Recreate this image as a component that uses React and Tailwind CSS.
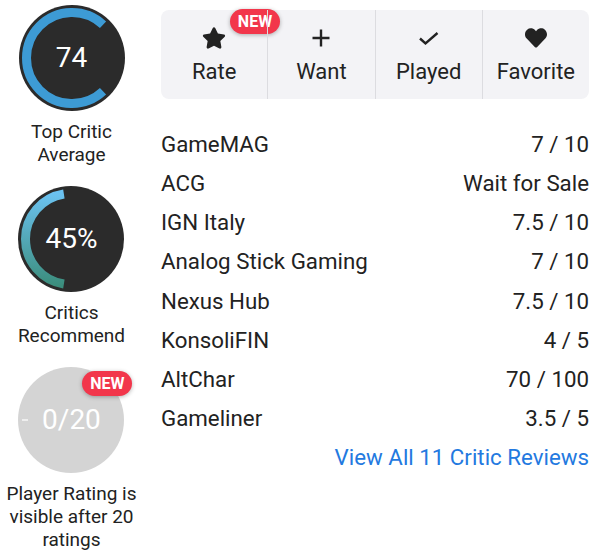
import { FaStar, FaHeart } from "react-icons/fa"

const R = 45.5

// angles measured from 12 o'clock, clockwise
function arc(start, sweep) {
  const pt = (deg) => {
    const a = (deg * Math.PI) / 180
    return `${(53 + R * Math.sin(a)).toFixed(2)} ${(53 - R * Math.cos(a)).toFixed(2)}`
  }
  return `M ${pt(start)} A ${R} ${R} 0 ${sweep > 180 ? 1 : 0} 1 ${pt(start + sweep)}`
}

const reviews = [
  ["GameMAG", "7 / 10"],
  ["ACG", "Wait for Sale"],
  ["IGN Italy", "7.5 / 10"],
  ["Analog Stick Gaming", "7 / 10"],
  ["Nexus Hub", "7.5 / 10"],
  ["KonsoliFIN", "4 / 5"],
  ["AltChar", "70 / 100"],
  ["Gameliner", "3.5 / 5"],
]

function NewBadge({ className }) {
  return (
    <span
      className={`absolute flex h-[25px] w-[50px] items-center justify-center rounded-full bg-[#f2364b] text-[16px] font-bold leading-none text-white shadow-[0_1px_4px_rgba(0,0,0,0.3)] ${className}`}
    >
      NEW
    </span>
  )
}

function ScoreRing({ value, label, kind }) {
  return (
    <div className="flex flex-col items-center">
      <div className="relative h-[106px] w-[106px]">
        <svg width="106" height="106" viewBox="0 0 106 106" className="absolute inset-0">
          <defs>
            <linearGradient id="recGrad" x1="0" y1="6" x2="0" y2="100" gradientUnits="userSpaceOnUse">
              <stop offset="0" stopColor="#6cc3f3" />
              <stop offset="1" stopColor="#3b8d7c" />
            </linearGradient>
          </defs>
          {kind === "empty" ? (
            <>
              <circle cx="53" cy="53" r="53" fill="#d4d4d4" />
              <line x1="4" y1="53" x2="10" y2="53" stroke="#ffffff" strokeOpacity="0.6" strokeWidth="2" />
            </>
          ) : (
            <>
              <circle cx="53" cy="53" r="53" fill="#2b2b2b" />
              <path
                d={kind === "avg" ? arc(137, 266) : arc(189, 162)}
                fill="none"
                stroke={kind === "avg" ? "#3d9bd5" : "url(#recGrad)"}
                strokeWidth="9"
              />
            </>
          )}
        </svg>
        <div className="absolute inset-0 flex items-center justify-center text-[28px] text-white">{value}</div>
        {kind === "empty" && <NewBadge className="left-[64px] top-[4px]" />}
      </div>
      <div className="mt-[9px] text-center text-[19px] leading-[23px] text-[#222]">{label}</div>
    </div>
  )
}

export default function App() {
  const actions = [
    { label: "Rate", icon: <FaStar size={24} /> },
    {
      label: "Want",
      icon: (
        <svg width="24" height="24" viewBox="0 0 24 24">
          <path d="M12 3.5v17M3.5 12h17" stroke="#222" strokeWidth="2.4" fill="none" />
        </svg>
      ),
    },
    {
      label: "Played",
      icon: (
        <svg width="24" height="24" viewBox="0 0 24 24">
          <path d="M3 12.5l5.5 5L20.5 7" stroke="#222" strokeWidth="2.4" fill="none" />
        </svg>
      ),
    },
    { label: "Favorite", icon: <FaHeart size={22} /> },
  ]

  return (
    <div className="flex h-[558px] w-[598px] bg-white font-['Roboto',sans-serif] text-[#222]">
      {/* score rings */}
      <div className="flex w-[143px] flex-col items-center gap-[20px] pt-[5px]">
        <ScoreRing value="74" label={<>Top Critic<br />Average</>} kind="avg" />
        <ScoreRing value="45%" label={<>Critics<br />Recommend</>} kind="rec" />
        <ScoreRing value="0/20" label={<>Player Rating is<br />visible after 20<br />ratings</>} kind="empty" />
      </div>

      {/* actions + reviews */}
      <div className="ml-[18px] w-[428px] pt-[10px]">
        <div className="relative flex h-[89px] rounded-lg bg-[#f3f3f6]">
          {actions.map((a, i) => (
            <div
              key={a.label}
              className={`relative flex flex-1 flex-col items-center justify-center gap-[9px] pt-[2px] ${i > 0 ? "border-l border-[#dcdce0]" : ""}`}
            >
              <div className="flex h-[24px] items-center justify-center text-[#222]">{a.icon}</div>
              <div className="text-[22px] leading-[26px]">{a.label}</div>
              {i === 0 && <NewBadge className="left-[69px] top-[-1px]" />}
            </div>
          ))}
        </div>

        <div className="mt-[26px]">
          {reviews.map(([name, score]) => (
            <div key={name} className="flex h-[39.2px] items-center justify-between text-[22.3px]">
              <span>{name}</span>
              <span>{score}</span>
            </div>
          ))}
          <div className="flex h-[39.2px] items-center justify-end text-[22.3px] text-[#2379e0]">
            View All 11 Critic Reviews
          </div>
        </div>
      </div>
    </div>
  )
}
